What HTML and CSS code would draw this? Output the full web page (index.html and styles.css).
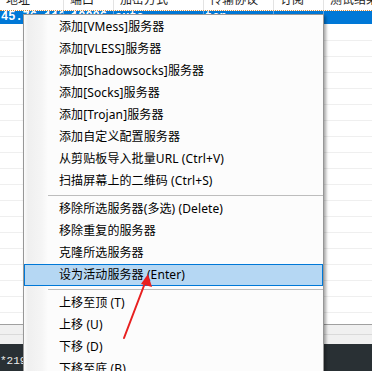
FILE: index.html
```html
<!DOCTYPE html>
<html lang="zh-CN">
<head>
  <meta charset="UTF-8">
  <title>服务器列表</title>
  <link rel="stylesheet" href="styles.css">
</head>
<body>
  <div class="window">

    <!-- server list -->
    <div class="list">
      <div class="head">
        <div class="cell c1"><span>地址</span></div>
        <div class="cell c2"><span>端口</span></div>
        <div class="cell c3"><span>加密方式</span></div>
        <div class="cell c4"><span>传输协议</span></div>
        <div class="cell c5"><span>订阅</span></div>
        <div class="cell c6"><span>测试结果</span></div>
      </div>
      <div class="sel">
        <div class="cell c1">45.76.112.9</div>
        <div class="cell c2">10086</div>
        <div class="cell c3">auto</div>
        <div class="cell c4">tcp</div>
        <div class="cell c5"></div>
        <div class="cell c6"></div>
      </div>
      <div class="rows">
        <div></div><div></div><div></div><div></div><div></div><div></div>
        <div></div><div></div><div></div><div></div><div></div><div></div>
        <div></div><div></div><div></div><div></div><div></div><div></div>
      </div>
    </div>
    <div class="hbar"></div>
    <div class="tabs"></div>
    <div class="console">*219</div>

    <!-- context menu -->
    <div class="menu">
      <div class="item">添加[VMess]服务器</div>
      <div class="item">添加[VLESS]服务器</div>
      <div class="item">添加[Shadowsocks]服务器</div>
      <div class="item">添加[Socks]服务器</div>
      <div class="item">添加[Trojan]服务器</div>
      <div class="item">添加自定义配置服务器</div>
      <div class="item">从剪贴板导入批量URL (Ctrl+V)</div>
      <div class="item">扫描屏幕上的二维码 (Ctrl+S)</div>
      <div class="sep"></div>
      <div class="item">移除所选服务器(多选) (Delete)</div>
      <div class="item">移除重复的服务器</div>
      <div class="item">克隆所选服务器</div>
      <div class="item active">设为活动服务器 (Enter)</div>
      <div class="sep"></div>
      <div class="item">上移至顶 (T)</div>
      <div class="item">上移 (U)</div>
      <div class="item">下移 (D)</div>
      <div class="item">下移至底 (B)</div>
    </div>

    <svg class="arrow" width="372" height="371" viewBox="0 0 372 371">
      <line x1="124" y1="338" x2="145" y2="283" stroke="#e82020" stroke-width="2" stroke-linecap="round"/>
      <polygon points="148,274 152,287 141,284" fill="#e82020"/>
    </svg>
  </div>
</body>
</html>
```

FILE: styles.css
```css
  * {
    box-sizing: border-box;
  }
  body {
    margin: 0;
    width: 372px;
    height: 371px;
    overflow: hidden;
    background: #fff;
    font-family: "Noto Sans", "Noto Sans CJK SC", sans-serif;
    font-size: 12px;
    color: #000;
  }
  .window {
    position: relative;
    height: 371px;
  }
  .list {
    height: 325px;
    border-bottom: 1px solid #a0a0a0;
    overflow: hidden;
  }
  .head {
    display: flex;
    height: 11px;
    border-bottom: 1px dotted #d48a3e;
    overflow: hidden;
    color: #1e1e1e;
  }
  .head .cell {
    display: flex;
    align-items: flex-end;
    padding-left: 6px;
    border-right: 1px solid #e3e3e3;
    overflow: hidden;
  }
  .head .cell span {
    flex-shrink: 0;
    margin-bottom: 2px;
    line-height: 16px;
    white-space: nowrap;
  }
  .c1 { width: 64px; }
  .c2 { width: 50px; }
  .c3 { width: 90px; }
  .c4 { width: 70px; }
  .c5 { width: 50px; }
  .c6 { flex: 1; border-right: 0 !important; }

  .sel {
    display: flex;
    height: 13px;
    background: #0078d7;
    color: #fff;
  }
  .sel .cell {
    padding-left: 1px;
    border-right: 1px solid #5ea6e8;
    overflow: hidden;
    white-space: nowrap;
    font-family: "Liberation Mono", monospace;
    font-weight: bold;
    font-size: 12px;
    line-height: 13px;
  }
  .sel .c2 {
    padding-left: 7px;
  }
  .rows {
    margin-top: 1px;
  }
  .rows div {
    height: 16px;
    border-bottom: 1px solid #efefef;
  }
  .hbar {
    height: 10px;
    background: #f0f0f0;
    border-bottom: 1px solid #dadada;
  }
  .tabs {
    height: 9px;
    background: #f0f0f0;
  }
  .console {
    height: 27px;
    padding-top: 11px;
    background: #293034;
    color: #ececec;
    font-family: "Liberation Mono", monospace;
    font-size: 11px;
    line-height: 13px;
  }

  .menu {
    position: absolute;
    left: 23px;
    top: 14px;
    width: 301px;
    padding: 1px 0;
    border: 1px solid #979797;
    background: linear-gradient(to right, #fbfbfb 0, #efefef 4px, #f5f5f5 18px, #fcfcfc 24px, #fcfcfc 100%);
    box-shadow: 2px 2px 3px rgba(0, 0, 0, 0.35);
  }
  .item {
    height: 22px;
    line-height: 22px;
    padding-left: 35px;
    white-space: nowrap;
    letter-spacing: 0.1px;
  }
  .item.active {
    background: #b5d7f3;
    border: 1px solid #0078d7;
    padding-left: 34px;
    line-height: 20px;
  }
  .sep {
    height: 1px;
    margin: 3px 0 2px 24px;
    background: #bdbdbd;
  }
  .arrow {
    position: absolute;
    left: 0;
    top: 0;
    pointer-events: none;
  }
```
